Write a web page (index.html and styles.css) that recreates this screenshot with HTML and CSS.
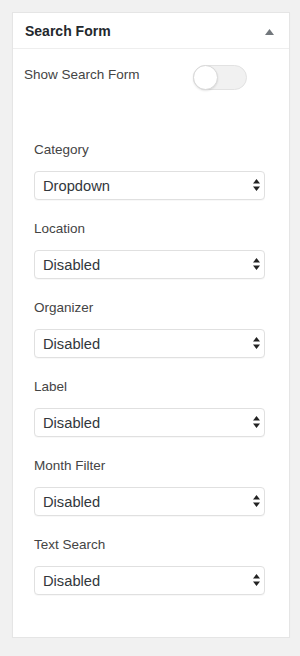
FILE: index.html
```html
<!DOCTYPE html>
<html>
<head>
<meta charset="utf-8">
<link rel="stylesheet" href="styles.css">
</head>
<body>
<div class="card">
  <div class="card-header">
    <h2 class="card-title">Search Form</h2>
    <svg class="collapse" width="9" height="6" viewBox="0 0 9 6"><path d="M4.5 0 L9 6 L0 6 Z" fill="#72777c"/></svg>
  </div>
  <div class="toggle-row">
    <span class="toggle-label">Show Search Form</span>
    <span class="toggle"><span class="knob"></span></span>
  </div>
  <div class="fields">
    <div class="field">
      <div class="field-label">Category</div>
      <div class="select-wrap">
        <select class="select"><option>Dropdown</option></select>
        <svg class="arrows" width="7" height="12" viewBox="0 0 7 12"><path d="M3.5 0 L7 4.5 L0 4.5 Z M3.5 12 L7 7.5 L0 7.5 Z" fill="#222"/></svg>
      </div>
    </div>
    <div class="field">
      <div class="field-label">Location</div>
      <div class="select-wrap">
        <select class="select"><option>Disabled</option></select>
        <svg class="arrows" width="7" height="12" viewBox="0 0 7 12"><path d="M3.5 0 L7 4.5 L0 4.5 Z M3.5 12 L7 7.5 L0 7.5 Z" fill="#222"/></svg>
      </div>
    </div>
    <div class="field">
      <div class="field-label">Organizer</div>
      <div class="select-wrap">
        <select class="select"><option>Disabled</option></select>
        <svg class="arrows" width="7" height="12" viewBox="0 0 7 12"><path d="M3.5 0 L7 4.5 L0 4.5 Z M3.5 12 L7 7.5 L0 7.5 Z" fill="#222"/></svg>
      </div>
    </div>
    <div class="field">
      <div class="field-label">Label</div>
      <div class="select-wrap">
        <select class="select"><option>Disabled</option></select>
        <svg class="arrows" width="7" height="12" viewBox="0 0 7 12"><path d="M3.5 0 L7 4.5 L0 4.5 Z M3.5 12 L7 7.5 L0 7.5 Z" fill="#222"/></svg>
      </div>
    </div>
    <div class="field">
      <div class="field-label">Month Filter</div>
      <div class="select-wrap">
        <select class="select"><option>Disabled</option></select>
        <svg class="arrows" width="7" height="12" viewBox="0 0 7 12"><path d="M3.5 0 L7 4.5 L0 4.5 Z M3.5 12 L7 7.5 L0 7.5 Z" fill="#222"/></svg>
      </div>
    </div>
    <div class="field">
      <div class="field-label">Text Search</div>
      <div class="select-wrap">
        <select class="select"><option>Disabled</option></select>
        <svg class="arrows" width="7" height="12" viewBox="0 0 7 12"><path d="M3.5 0 L7 4.5 L0 4.5 Z M3.5 12 L7 7.5 L0 7.5 Z" fill="#222"/></svg>
      </div>
    </div>
  </div>
</div>
</body>
</html>
```
FILE: styles.css
```css
html, body {
  margin: 0;
  padding: 0;
  background: #f1f1f1;
}
body {
  padding: 12px 0 0 12px;
  font-family: "Liberation Sans", Arial, sans-serif;
  color: #444;
}
.card {
  width: 276px;
  background: #fff;
  border: 1px solid #e5e5e5;
  box-shadow: 0 1px 1px rgba(0,0,0,0.04);
  padding-bottom: 42px;
}
.card-header {
  height: 35px;
  border-bottom: 1px solid #eee;
  display: flex;
  align-items: center;
  justify-content: space-between;
  padding: 0 15px 0 12px;
}
.card-title {
  margin: 0;
  font-size: 14px;
  font-weight: 700;
  color: #23282d;
}
.collapse {
  margin-top: 2px;
}
.toggle-row {
  display: flex;
  align-items: center;
  padding: 16px 0 0 11px;
}
.toggle-label {
  font-size: 13.5px;
  color: #444;
  width: 169px;
  margin-top: -6px;
}
.toggle {
  position: relative;
  width: 52px;
  height: 23px;
  border: 1px solid #e2e2e2;
  border-radius: 13px;
  background: #f1f1f1;
}
.knob {
  position: absolute;
  left: -1px;
  top: -1px;
  width: 23px;
  height: 23px;
  border: 1px solid #d8d8d8;
  border-radius: 50%;
  background: #fff;
  box-shadow: 0 1px 2px rgba(0,0,0,0.1);
}
.fields {
  padding: 51px 24px 0 21px;
  display: flex;
  flex-direction: column;
  gap: 20px;
}
.field-label {
  font-size: 13.5px;
  line-height: 18px;
  color: #444;
  margin-bottom: 12px;
}
.select-wrap {
  position: relative;
}
.select {
  appearance: none;
  -webkit-appearance: none;
  display: block;
  width: 231px;
  height: 29px;
  margin: 0;
  padding: 0 20px 0 8px;
  border: 1px solid #e0e0e0;
  border-radius: 4px;
  background: #fff;
  font-family: "Liberation Sans", Arial, sans-serif;
  font-size: 14.7px;
  color: #32373c;
  box-shadow: 0 1px 1px rgba(0,0,0,0.03);
}
.arrows {
  position: absolute;
  right: 5px;
  top: 8px;
  pointer-events: none;
}
```
